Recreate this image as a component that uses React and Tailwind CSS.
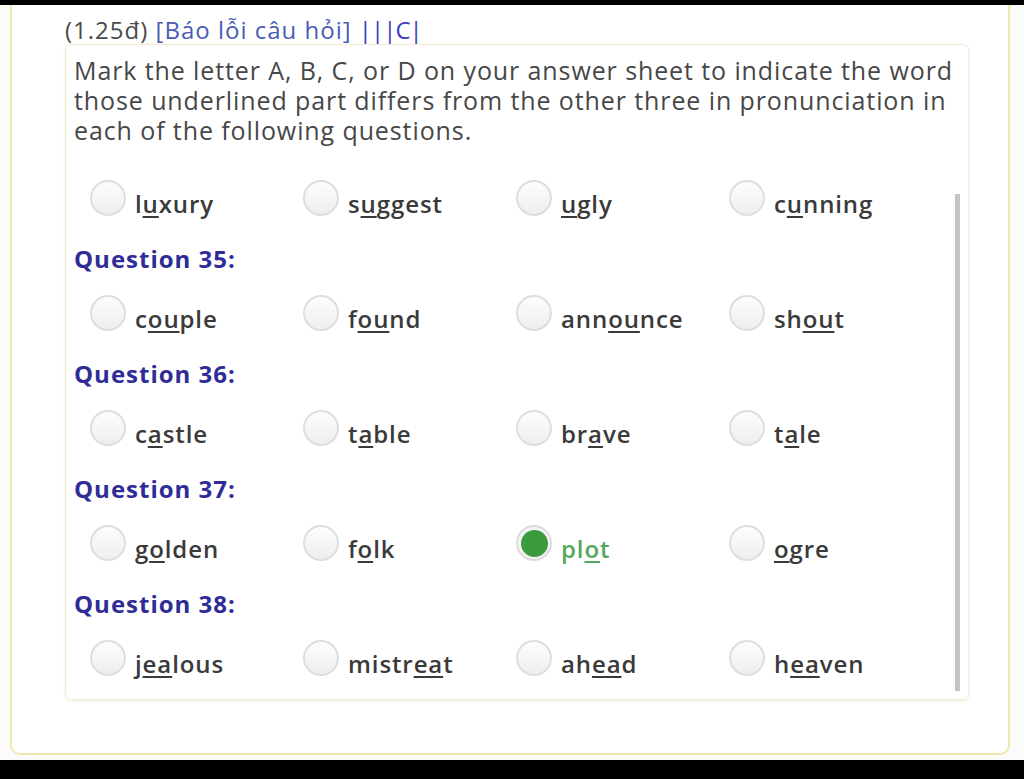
import React from 'react'

const questions = [
  { label: null, options: [['l', 'u', 'xury'], ['s', 'u', 'ggest'], ['', 'u', 'gly'], ['c', 'u', 'nning']] },
  { label: 'Question 35:', options: [['c', 'ou', 'ple'], ['f', 'ou', 'nd'], ['ann', 'ou', 'nce'], ['sh', 'ou', 't']] },
  { label: 'Question 36:', options: [['c', 'a', 'stle'], ['t', 'a', 'ble'], ['br', 'a', 've'], ['t', 'a', 'le']] },
  { label: 'Question 37:', options: [['g', 'o', 'lden'], ['f', 'o', 'lk'], ['pl', 'o', 't', true], ['', 'o', 'gre']] },
  { label: 'Question 38:', options: [['j', 'ea', 'lous'], ['mistr', 'ea', 't'], ['ah', 'ea', 'd'], ['h', 'ea', 'ven']] },
]

function Radio({ checked }) {
  if (checked) {
    return (
      <span className="w-[36px] h-[36px] rounded-full border-2 border-[#dcdcdc] bg-[#f4f4f4] flex items-center justify-center shrink-0">
        <span className="w-[27px] h-[27px] rounded-full bg-[#3c9a3e]" />
      </span>
    )
  }
  return (
    <span className="w-[36px] h-[36px] rounded-full border-2 border-[#dedede] bg-gradient-to-b from-[#fdfdfd] to-[#eeeeee] shrink-0" />
  )
}

function Option({ pre, mark, post, checked }) {
  return (
    <div className="flex items-start gap-[9px]">
      <Radio checked={checked} />
      <span className={`text-[24px] leading-[50px] -mt-[1px] font-semibold tracking-[0.9px] ${checked ? 'text-[#55a85a]' : 'text-[#3a3a3a]'}`}>
        {pre}
        <span className="underline decoration-2 underline-offset-[3px]">{mark}</span>
        {post}
      </span>
    </div>
  )
}

export default function App() {
  return (
    <div className="w-[1024px] h-[779px] bg-black flex flex-col" style={{ fontFamily: '"Open Sans", Lato, sans-serif' }}>
      <div className="h-[5px] shrink-0" />
      <div className="flex-1 bg-[#fbfbfb] pl-[10px] pr-[14px] pb-[5px] flex flex-col">
        <div className="flex-1 border-2 border-t-0 border-[#f0e8ae] rounded-b-[10px] bg-white pl-[53px] pt-[10px]">
          <div className="h-[29px] text-[24px] leading-[29px] text-[#4a4a4a] tracking-[1px] whitespace-nowrap">
            (1.25đ) <span className="text-[#4a5cb8]">[Báo lỗi câu hỏi]</span>{' '}
            <span className="text-[#3d3dc4] tracking-[-1px]">|||C|</span>
          </div>
          <div className="relative w-[904px] h-[656px] border border-[#f1ecd2] rounded-[6px] shadow-[0_1px_3px_rgba(200,190,120,0.25)] pl-[8px] pt-[10px]">
            <p className="text-[25px] leading-[30px] text-[#474747] tracking-[0.9px] pr-[10px]">
              Mark the letter A, B, C, or D on your answer sheet to indicate the word those underlined part differs from the other three in pronunciation in each of the following questions.
            </p>
            <div className="mt-[35px]">
              {questions.map((q, i) => (
                <div key={i}>
                  {q.label && (
                    <div className="mt-[11px] mb-[18px] h-[36px] text-[24px] leading-[36px] font-bold tracking-[1px] text-[#2f2c97]">
                      {q.label}
                    </div>
                  )}
                  <div className="grid grid-cols-[213px_213px_213px_213px] pl-[16px] h-[50px]">
                    {q.options.map((o, j) => (
                      <Option key={j} pre={o[0]} mark={o[1]} post={o[2]} checked={o[3]} />
                    ))}
                  </div>
                </div>
              ))}
            </div>
            <div className="absolute left-[889px] top-[149px] w-[5px] h-[497px] bg-[#c4c4c4]" />
          </div>
        </div>
      </div>
      <div className="h-[19px] shrink-0" />
    </div>
  )
}
